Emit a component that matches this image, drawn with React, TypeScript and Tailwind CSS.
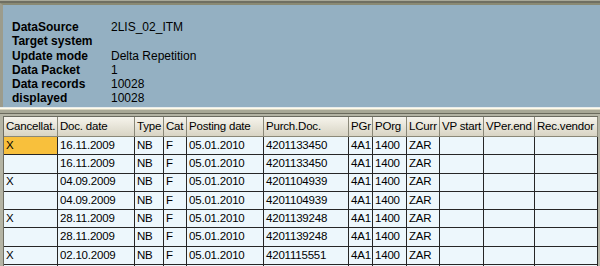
const fields: [string, string][] = [
  ['DataSource', '2LIS_02_ITM'],
  ['Target system', ''],
  ['Update mode', 'Delta Repetition'],
  ['Data Packet', '1'],
  ['Data records', '10028'],
  ['displayed', '10028'],
];

const columns = [
  'Cancellat.',
  'Doc. date',
  'Type',
  'Cat',
  'Posting date',
  'Purch.Doc.',
  'PGr',
  'POrg',
  'LCurr',
  'VP start',
  'VPer.end',
  'Rec.vendor',
];

const rows: string[][] = [
  ['X', '16.11.2009', 'NB', 'F', '05.01.2010', '4201133450', '4A1', '1400', 'ZAR', '', '', ''],
  ['', '16.11.2009', 'NB', 'F', '05.01.2010', '4201133450', '4A1', '1400', 'ZAR', '', '', ''],
  ['X', '04.09.2009', 'NB', 'F', '05.01.2010', '4201104939', '4A1', '1400', 'ZAR', '', '', ''],
  ['', '04.09.2009', 'NB', 'F', '05.01.2010', '4201104939', '4A1', '1400', 'ZAR', '', '', ''],
  ['X', '28.11.2009', 'NB', 'F', '05.01.2010', '4201139248', '4A1', '1400', 'ZAR', '', '', ''],
  ['', '28.11.2009', 'NB', 'F', '05.01.2010', '4201139248', '4A1', '1400', 'ZAR', '', '', ''],
  ['X', '02.10.2009', 'NB', 'F', '05.01.2010', '4201115551', '4A1', '1400', 'ZAR', '', '', ''],
  ['', '', '', '', '', '', '', '', '', '', '', ''],
];

const gridCols =
  'grid grid-cols-[54px_77px_29px_23px_77px_85px_24px_34px_33px_44px_51px_63px]';

export default function App() {
  return (
    <div className="w-[600px] h-[266px] overflow-hidden bg-[#b4b4a4] font-['Liberation_Sans',Arial,sans-serif] text-black">
      {/* header info panel */}
      <div className="border-t border-[#a8a898]">
        <div className="border-t-[2px] border-[#6f6f62]">
          <div className="border-t-[2px] border-[#8a8a74] border-l-[3px] border-l-[#9c9c8c]">
            <div className="h-[102px] bg-[#94b0c2] pt-[15px] pl-[9px]">
              {fields.map(([label, value]) => (
                <div key={label} className="flex h-[14.25px] items-center text-[12px] leading-none">
                  <span className="w-[99px] font-bold">{label}</span>
                  <span>{value}</span>
                </div>
              ))}
            </div>
          </div>
        </div>
        <div className="h-[1px] bg-[#e8ecec]" />
        <div className="h-[1px] bg-[#fffbe8]" />
        <div className="h-[1px] bg-[#d8d4c0]" />
        <div className="h-[3px] bg-[#a8a896]" />
        <div className="h-[1px] bg-[#6a6a5c]" />
      </div>

      {/* table */}
      <div className="pl-[3px] pt-[2px]">
        <div className="w-[595px] border-l border-t border-[#6c6c60] text-[11.5px] leading-none tracking-[-0.2px]">
          <div className={`${gridCols} h-[20px]`}>
            {columns.map(c => (
              <div
                key={c}
                className="flex items-center overflow-hidden whitespace-nowrap pl-[2px] border-r border-b border-[#8a8878] bg-gradient-to-b from-[#f6f4ec] to-[#d8d4c4]"
              >
                {c}
              </div>
            ))}
          </div>
          {rows.map((r, i) => (
            <div key={i} className={`${gridCols} h-[18.3px]`}>
              {r.map((v, j) => (
                <div
                  key={j}
                  className={`flex items-center overflow-hidden whitespace-nowrap pl-[2px] border-r border-b border-[#262626] ${
                    i === 0 && j === 0 ? 'bg-[#f8c03c]' : 'bg-[#edf7fc]'
                  }`}
                >
                  {v}
                </div>
              ))}
            </div>
          ))}
        </div>
      </div>
    </div>
  );
}
